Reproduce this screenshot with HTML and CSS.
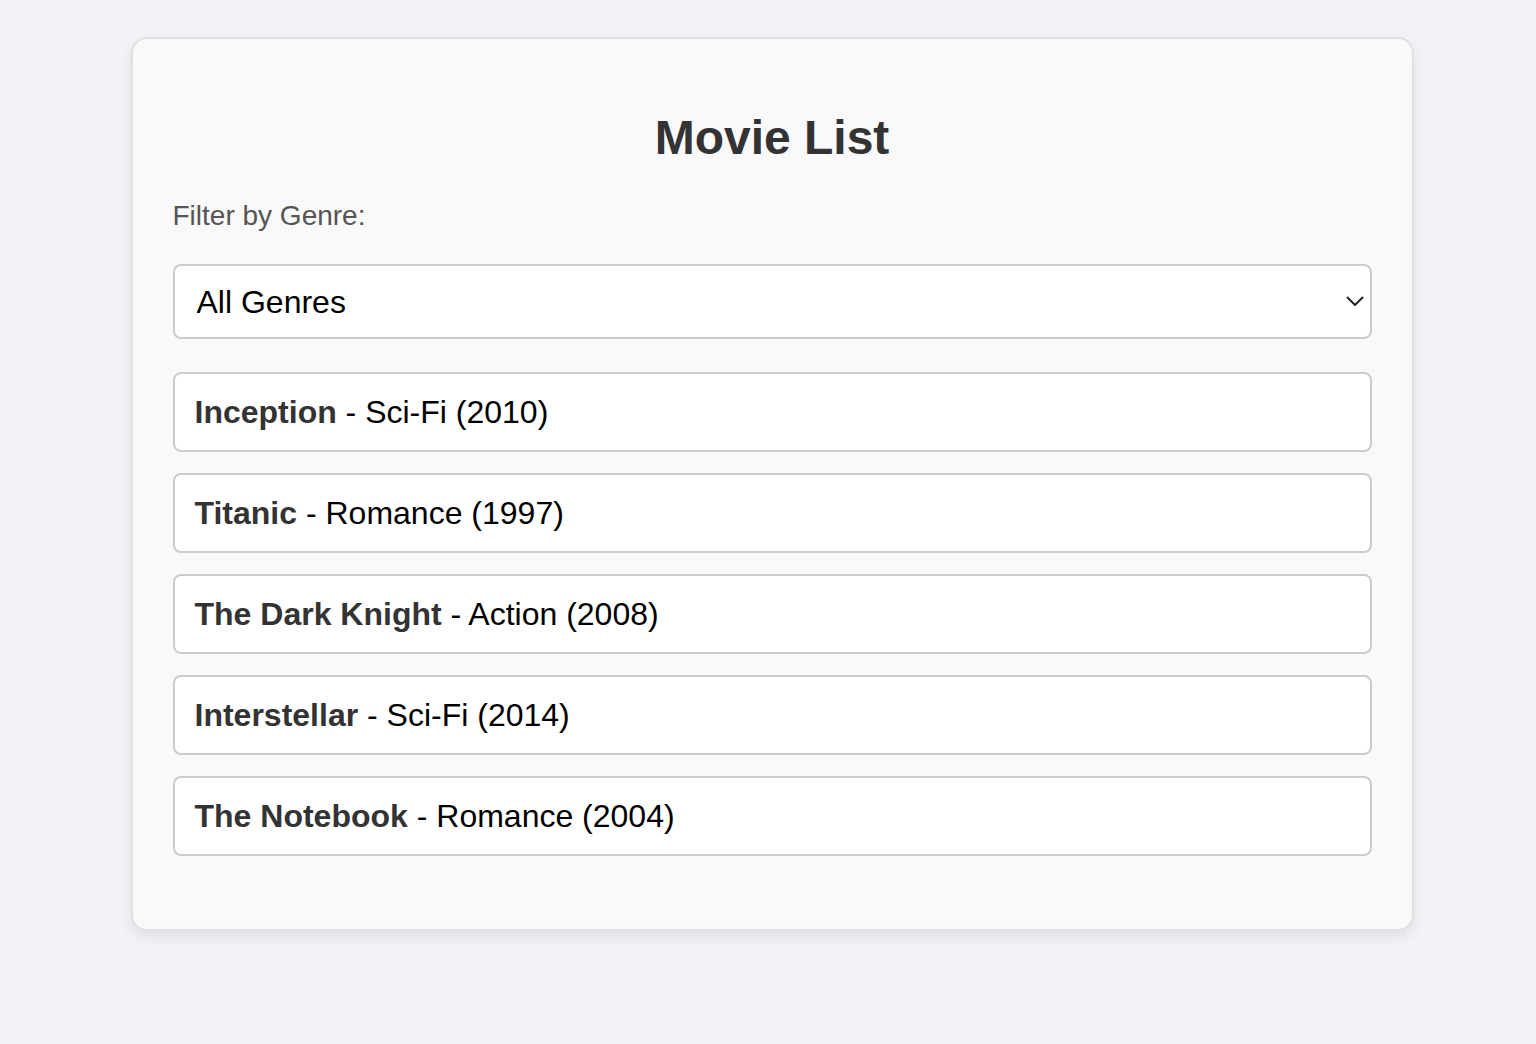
FILE: index.html
```html
<!DOCTYPE html>
<html lang="en">
<head>
<meta charset="utf-8">
<title>Movie List</title>
<link rel="stylesheet" href="styles.css">
</head>
<body>
<div class="page">
  <main class="card">
    <h1 class="title">Movie List</h1>
    <label class="filter-label" for="genre">Filter by Genre:</label>
    <div class="select-wrap">
      <select id="genre" class="genre-select">
        <option>All Genres</option>
        <option>Sci-Fi</option>
        <option>Romance</option>
        <option>Action</option>
      </select>
      <svg class="chevron" width="18" height="10" viewBox="0 0 18 10" aria-hidden="true"><path d="M1 1 L9 9 L17 1" fill="none" stroke="#222" stroke-width="2"/></svg>
    </div>
    <ul class="movie-list">
      <li class="movie"><strong>Inception</strong> - Sci-Fi (2010)</li>
      <li class="movie"><strong>Titanic</strong> - Romance (1997)</li>
      <li class="movie"><strong>The Dark Knight</strong> - Action (2008)</li>
      <li class="movie"><strong>Interstellar</strong> - Sci-Fi (2014)</li>
      <li class="movie"><strong>The Notebook</strong> - Romance (2004)</li>
    </ul>
  </main>
</div>
</body>
</html>
```

FILE: styles.css
```css
* { box-sizing: border-box; }

html, body {
  margin: 0;
  padding: 0;
  background: #f3f3f7;
  font-family: "Liberation Sans", Arial, sans-serif;
}

.page {
  display: flex;
  justify-content: center;
  padding: 37px 0 60px 8px;
}

.card {
  width: 1283px;
  background: #f9f9f9;
  border: 2px solid #e0e0e0;
  border-radius: 16px;
  padding: 39px 40px;
  box-shadow: 0 6px 14px rgba(0, 0, 0, 0.08);
}

.title {
  margin: 32px 0 35px;
  font-size: 48px;
  line-height: 55px;
  font-weight: bold;
  color: #333;
  text-align: center;
}

.filter-label {
  display: block;
  font-size: 28px;
  line-height: 32px;
  color: #555;
  margin-bottom: 32px;
}

.select-wrap {
  position: relative;
  margin-bottom: 33px;
}

.genre-select {
  display: block;
  width: 100%;
  height: 75px;
  -webkit-appearance: none;
  appearance: none;
  background: #fff;
  border: 2px solid #ccc;
  border-radius: 8px;
  padding: 0 22px;
  font-family: "Liberation Sans", Arial, sans-serif;
  font-size: 32px;
  color: #000;
  outline: none;
}

.chevron {
  position: absolute;
  right: 8px;
  top: 32px;
  pointer-events: none;
}

.movie-list {
  list-style: none;
  margin: 0 0 34px;
  padding: 0;
  display: flex;
  flex-direction: column;
  gap: 21px;
}

.movie {
  background: #fff;
  border: 2px solid #ccc;
  border-radius: 8px;
  padding: 20px 20px;
  font-size: 32px;
  line-height: 36px;
  color: #000;
}

.movie strong {
  color: #333;
}
```
